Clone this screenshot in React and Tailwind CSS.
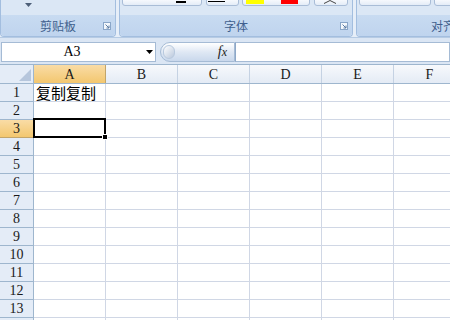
import React from 'react';

const COLS = ['A', 'B', 'C', 'D', 'E', 'F'];
const ROWS = [1, 2, 3, 4, 5, 6, 7, 8, 9, 10, 11, 12, 13, 14];

const cjk = { fontFamily: '"Noto Sans CJK SC", "Noto Sans", sans-serif' };
const sheetFont = { fontFamily: '"Liberation Serif", "Noto Sans CJK SC", serif' };

function Launcher() {
  return (
    <svg width="8" height="8" viewBox="0 0 8 8" className="mt-[1px]">
      <rect x="0.5" y="0.5" width="7" height="7" fill="#f4f8fc" stroke="#8aa6c8" />
      <path d="M2.5 2.5 L6 6 M6 3.5 L6 6 L3.5 6" stroke="#5a7aa2" strokeWidth="1" fill="none" />
    </svg>
  );
}

function Group( { width, label, launcher, children } )
{
  return (
    <div
      className="flex flex-col h-[37px] border-x border-b border-[#a3bedf] rounded-b-[4px] overflow-hidden shrink-0"
      style={ { width } }
    >
      <div className="h-[15px] bg-[#dbe7f5] relative flex items-start">{ children }</div>
      <div className="h-[21px] bg-[linear-gradient(#c8dbf1,#bfd4ee)] flex items-center justify-center text-[12px] text-[#3f5f8d] relative" style={ cjk }>
        <span>{ label }</span>
        { launcher && <div className="absolute right-[4px] top-[6px] flex"><Launcher /></div> }
      </div>
    </div>
  );
}

function Btn( { className = '', children } )
{
  return (
    <div className={ "h-[7px] -mt-[1px] border border-[#a9bdd7] rounded-b-[3px] bg-[linear-gradient(#f6f9fd,#e4ecf7)] relative shrink-0 " + className }>
      { children }
    </div>
  );
}

export default function App()
{
  return (
    <div className="w-[450px] h-[320px] overflow-hidden bg-white">
      {/* ribbon */ }
      <div className="flex h-[38px] bg-[#e6eef8] gap-[3px] border-b border-[#b6cbe4] overflow-hidden">
        <Group width={ 116 } label="剪贴板" launcher>
          <svg width="7" height="4" viewBox="0 0 7 4" className="ml-[24px] mt-[3px]">
            <path d="M0 0 H7 L3.5 4 Z" fill="#4d5f78" />
          </svg>
        </Group>
        <Group width={ 234 } label="字体" launcher>
          <Btn className="ml-[2px] w-[80px]">
            <div className="absolute left-[53px] top-[1px] w-[10px] h-[2px] bg-black" />
          </Btn>
          <Btn className="ml-[4px] w-[33px]">
            <div className="absolute left-[1px] top-[1px] w-[17px] h-[1px] bg-black" />
          </Btn>
          <Btn className="ml-[3px] w-[68px] flex">
            <div className="absolute left-[3px] top-0 w-[18px] h-[4px] bg-[#ffff00]" />
            <div className="absolute left-[38px] top-0 w-[17px] h-[4px] bg-[#ff0000]" />
          </Btn>
          <Btn className="ml-[4px] w-[34px]">
            <svg width="12" height="4" viewBox="0 0 12 4" className="absolute left-[9px] top-0">
              <path d="M0 3.5 L6 0.5 L12 3.5" stroke="#444" strokeWidth="1" fill="none" />
            </svg>
          </Btn>
        </Group>
        <Group width={ 174 } label="对齐">
          <Btn className="ml-[2px] w-[72px]" />
          <Btn className="ml-[3px] w-[40px]" />
        </Group>
      </div>

      {/* formula bar */ }
      <div className="flex h-[26px] items-center bg-[#dbe6f4] pt-[1px]">
        <div className="ml-[1px] w-[155px] h-[20px] bg-white border border-[#a5bbd5] flex items-center" style={ sheetFont }>
          <span className="w-[140px] text-center text-[14px] text-black">A3</span>
          <svg width="7" height="4" viewBox="0 0 7 4" className="ml-[4px]">
            <path d="M0 0 H7 L3.5 4 Z" fill="#000" />
          </svg>
        </div>
        <div className="ml-[4px] w-[75px] h-[20px] rounded-l-full border border-[#a5bbd5] bg-[linear-gradient(#ffffff,#dfe8f4_50%,#c9d8ec)] flex items-center">
          <div className="ml-[2px] w-[12px] h-[14px] rounded-full bg-[linear-gradient(135deg,#ffffff,#b9c8dc)] border border-[#b8c9de]" />
          <span className="ml-auto mr-[7px] text-[14px] italic text-[#222]" style={ { fontFamily: '"Liberation Serif", serif' } }>f<span className="text-[12px]">x</span></span>
        </div>
        <div className="flex-1 h-[20px] bg-white border border-[#a5bbd5] border-l-[#8ea8c8]" />
      </div>

      {/* sheet */ }
      <div className="text-[14px] text-[#1a1a1a]" style={ sheetFont }>
        <div className="flex h-[20px] border-y border-[#9eb6ce] bg-[#e9eff7]">
          <div className="w-[34px] shrink-0 border-r border-[#9eb6ce] bg-[#e4ecf7] flex items-end justify-end pr-[2px] pb-[2px]">
            <svg width="12" height="12" viewBox="0 0 12 12">
              <path d="M12 0 V12 H0 Z" fill="#b6c6dc" />
            </svg>
          </div>
          { COLS.map( ( c ) => (
            <div
              key={ c }
              className={ "w-[72px] shrink-0 border-r flex items-center justify-center " +
                ( c === 'A'
                  ? 'bg-[linear-gradient(#f9dca6,#f3c76f)] border-[#c2a56a]'
                  : 'bg-[linear-gradient(#f7f9fc,#e4ebf5)] border-[#c5d2e3]' ) }
            >
              { c }
            </div>
          ) ) }
        </div>
        { ROWS.map( ( r ) => (
          <div key={ r } className="flex h-[18px]">
            <div
              className={ "w-[34px] shrink-0 border-r border-b flex items-center justify-center " +
                ( r === 3
                  ? 'bg-[linear-gradient(#f9dca6,#f3c76f)] border-[#c2a56a]'
                  : 'bg-[#e4ecf7] border-[#9eb6ce]' ) }
            >
              { r < 14 ? r : null }
            </div>
            { COLS.map( ( c ) => (
              <div key={ c } className="w-[72px] shrink-0 border-r border-b border-[#d0d7e5] relative">
                { r === 1 && c === 'A' && (
                  <span className="absolute left-[2px] top-[-2px] text-[15px] text-black whitespace-nowrap" style={ cjk }>复制复制</span>
                ) }
                { r === 3 && c === 'A' && (
                  <div className="absolute -left-[1px] -top-[2px] -right-[1px] -bottom-[1px] border-2 border-black z-10">
                    <div className="absolute -right-[4px] -bottom-[4px] w-[6px] h-[6px] bg-black border border-white" />
                  </div>
                ) }
              </div>
            ) ) }
          </div>
        ) ) }
      </div>
    </div>
  );
}
